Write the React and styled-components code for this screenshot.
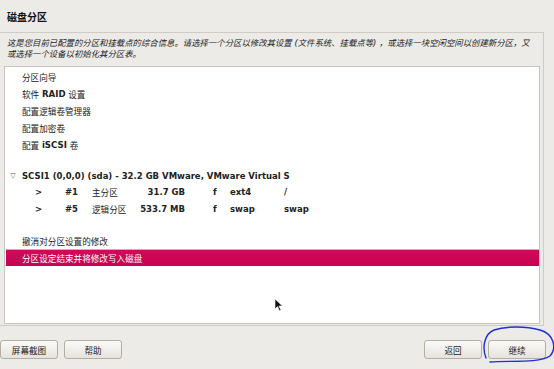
import React from "react";
import styled, { createGlobalStyle } from "styled-components";

const GlobalStyle = createGlobalStyle`
  html, body {
    margin: 0;
    padding: 0;
    background: #edebe7;
  }
  body {
    font-family: "DejaVu Sans", "Noto Sans CJK SC", sans-serif;
    color: #1e1e1e;
  }
`;

const Page = styled.div`
  position: relative;
  width: 554px;
  height: 369px;
  overflow: hidden;
  background: #edebe7;
  display: flex;
  flex-direction: column;
`;

const Title = styled.div`
  height: 32px;
  padding-left: 7px;
  display: flex;
  align-items: center;
  font-size: 10px;
  font-weight: bold;
  color: #111;
`;

const Frame = styled.div`
  width: 544px;
  height: 294px;
  border: 1px solid #d0ccc3;
  border-left: none;
  box-sizing: border-box;
  display: flex;
  flex-direction: column;
`;

const Intro = styled.p`
  margin: 0;
  height: 33px;
  padding: 5px 2px 0 7px;
  box-sizing: border-box;
  font-size: 8.4px;
  line-height: 11px;
  font-style: italic;
  color: #222;
`;

const ListBox = styled.div`
  margin-left: 4px;
  width: 536px;
  height: 258px;
  background: #fff;
  border: 1px solid #c8c4ba;
  box-sizing: border-box;
  padding-top: 1px;
  display: flex;
  flex-direction: column;
`;

const Item = styled.div`
  height: 17px;
  flex-shrink: 0;
  box-sizing: border-box;
  display: flex;
  align-items: center;
  padding-left: 16px;
  margin-left: 1px;
  font-size: 8.6px;
  white-space: pre;
  color: ${(p) => (p.$selected ? "#fff" : "#222")};
  background: ${(p) =>
    p.$selected ? "linear-gradient(#d4085a, #c50350)" : "transparent"};
  border-top: ${(p) => (p.$selected ? "1px solid #e9a0bd" : "none")};
  b {
    font-weight: bold;
    font-size: 8.6px;
  }
`;

const Gap = styled.div`
  height: ${(p) => p.$h}px;
  flex-shrink: 0;
`;

const Device = styled.div`
  height: 17px;
  flex-shrink: 0;
  display: flex;
  align-items: center;
  padding-left: 2px;
  font-size: 8.5px;
  font-weight: bold;
  white-space: nowrap;
  color: #222;
`;

const Arrow = styled.span`
  width: 12px;
  display: inline-flex;
  justify-content: center;
  font-size: 7px;
  font-weight: normal;
  color: #555;
  margin-right: 3px;
`;

const PartRow = styled.div`
  height: 16.5px;
  flex-shrink: 0;
  padding-left: 30px;
  display: grid;
  grid-template-columns: 30px 27px 47px 46px 28px 17px 54px 60px;
  align-items: center;
  font-size: 8.5px;
  font-weight: bold;
  white-space: nowrap;
  color: #222;
`;

const Cell = styled.span`
  text-align: ${(p) => (p.$right ? "right" : "left")};
  font-weight: ${(p) => (p.$cjk ? "normal" : "bold")};
  font-size: ${(p) => (p.$cjk ? "8.6px" : "inherit")};
`;

const Footer = styled.div`
  flex: 1;
  display: flex;
  align-items: center;
  justify-content: space-between;
  padding: 4px 8px 0 0;
`;

const ButtonGroup = styled.div`
  display: flex;
  gap: 6px;
`;

const Button = styled.button`
  width: 58px;
  height: 19px;
  margin: 0;
  padding: 0;
  border: 1px solid #b4aea3;
  border-radius: 3px;
  background: linear-gradient(#fbfaf8, #e6e3dd);
  font-family: "Noto Sans CJK SC", sans-serif;
  font-size: 8.6px;
  color: #222;
`;

const Cursor = styled.svg`
  position: absolute;
  left: 274px;
  top: 298px;
`;

const Scribble = styled.svg`
  position: absolute;
  left: 478px;
  top: 324px;
`;

const partitions = [
  { num: "#1", type: "主分区", size: "31.7 GB", fmt: "f", fs: "ext4", mount: "/" },
  { num: "#5", type: "逻辑分区", size: "533.7 MB", fmt: "f", fs: "swap", mount: "swap" },
];

export default function App() {
  return (
    <Page>
      <GlobalStyle />
      <Title>磁盘分区</Title>
      <Frame>
        <Intro>
          这是您目前已配置的分区和挂载点的综合信息。请选择一个分区以修改其设置 (文件系统、挂载点等) ，或选择一块空闲空间以创建新分区，又
          <br />
          或选择一个设备以初始化其分区表。
        </Intro>
        <ListBox>
          <Item>分区向导</Item>
          <Item>
            软件 <b>RAID</b> 设置
          </Item>
          <Item>配置逻辑卷管理器</Item>
          <Item>配置加密卷</Item>
          <Item>
            配置 <b>iSCSI</b> 卷
          </Item>
          <Gap $h={14} />
          <Device>
            <Arrow>▽</Arrow>SCSI1 (0,0,0) (sda) - 32.2 GB VMware, VMware Virtual S
          </Device>
          {partitions.map((p) => (
            <PartRow key={p.num}>
              <Cell>&gt;</Cell>
              <Cell>{p.num}</Cell>
              <Cell $cjk>{p.type}</Cell>
              <Cell $right>{p.size}</Cell>
              <Cell />
              <Cell>{p.fmt}</Cell>
              <Cell>{p.fs}</Cell>
              <Cell>{p.mount}</Cell>
            </PartRow>
          ))}
          <Gap $h={15} />
          <Item>撤消对分区设置的修改</Item>
          <Item $selected>分区设定结束并将修改写入磁盘</Item>
        </ListBox>
      </Frame>
      <Footer>
        <ButtonGroup>
          <Button>屏幕截图</Button>
          <Button>帮助</Button>
        </ButtonGroup>
        <ButtonGroup>
          <Button>返回</Button>
          <Button>继续</Button>
        </ButtonGroup>
      </Footer>
      <Cursor width="10" height="14" viewBox="0 0 10 14">
        <path d="M1 1 L1 11 L3.5 8.5 L5.5 13 L7 12.3 L5 8 L8.5 8 Z" fill="#111" stroke="#fff" strokeWidth="0.6" />
      </Cursor>
      <Scribble width="76" height="42" viewBox="0 0 76 42">
        <path
          d="M12 38 C30 36 60 40 72 32 C79 24 76 10 62 6 C48 2 28 2 16 6 C6 10 4 24 8 34"
          fill="none"
          stroke="#1c2fd8"
          strokeWidth="1.4"
          strokeLinecap="round"
        />
      </Scribble>
    </Page>
  );
}
